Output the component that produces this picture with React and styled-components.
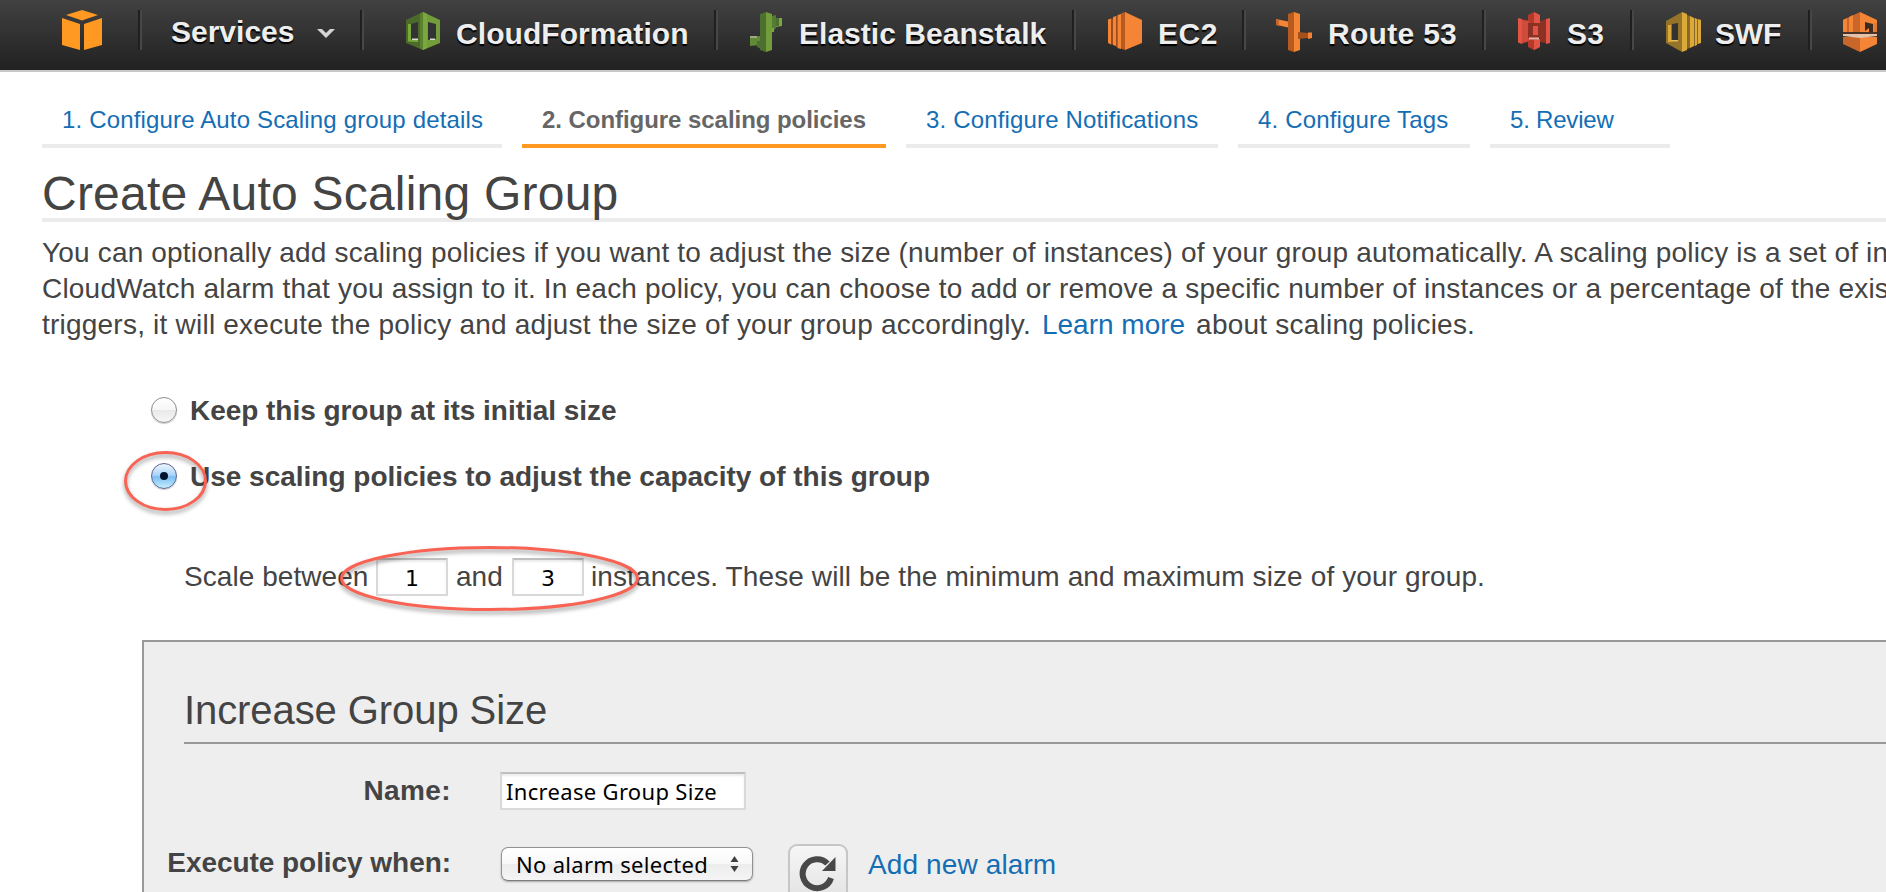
import React from "react";
import styled, { createGlobalStyle, css } from "styled-components";

const GlobalStyle = createGlobalStyle`
  * { box-sizing: border-box; }
  html, body { margin: 0; padding: 0; }
  body {
    background: #fff;
    color: #444;
    font-family: "Liberation Sans", Arial, sans-serif;
    overflow: hidden;
  }
`;

const Page = styled.div`
  display: flex;
  flex-direction: column;
  width: 100%;
  height: 892px;
  overflow: hidden;
`;

/* ---------- top navigation ---------- */

const NavBar = styled.header`
  display: flex;
  flex: none;
  height: 72px;
  overflow: hidden;
  background: linear-gradient(#414141, #222 98%);
  border-bottom: 2px solid #c8c8c8;
`;

const NavItem = styled.div`
  display: flex;
  flex: none;
  align-items: flex-start;
  width: ${(p) => p.$width}px;
  padding: ${(p) => p.$top ?? 12}px 0 0 ${(p) => p.$indent ?? 28}px;
`;

const Divider = styled.div`
  flex: none;
  width: 4px;
  height: 40px;
  margin-top: 10px;
  border-left: 2px solid #1f1f1f;
  border-right: 2px solid #474747;
`;

const NavLabel = styled.span`
  margin: ${(p) => p.$top ?? 4}px 0 0 ${(p) => p.$gap ?? 13}px;
  color: #eee;
  font-size: 30px;
  font-weight: bold;
  line-height: 36px;
  letter-spacing: ${(p) => p.$track ?? 0}px;
  text-shadow: 0 2px 1px #000;
  white-space: nowrap;
`;

const Caret = styled.svg`
  flex: none;
  display: block;
  margin: 14px 0 0 22px;
`;

const Icon = styled.svg`
  flex: none;
  display: block;
`;

/* ---------- wizard tabs ---------- */

const Tabs = styled.nav`
  display: flex;
  flex: none;
  gap: 20px;
  padding: 32px 0 0 42px;
`;

const Tab = styled.a`
  flex: none;
  width: ${(p) => p.$width}px;
  height: 44px;
  padding: 1px 0 0 20px;
  border-bottom: 4px solid #ebebeb;
  color: #146eb4;
  font-size: 24px;
  line-height: 30px;
  letter-spacing: ${(p) => p.$track}px;
  white-space: nowrap;
  ${(p) =>
    p.$active &&
    css`
      border-color: #ff9922;
      color: #666;
      font-weight: bold;
    `}
`;

/* ---------- page head ---------- */

const Title = styled.h1`
  flex: none;
  height: 56px;
  margin: 18px 0 0 42px;
  border-bottom: 4px solid #ebebeb;
  font-size: 48px;
  font-weight: normal;
  line-height: 56px;
  letter-spacing: 0.22px;
`;

const Intro = styled.div`
  flex: none;
  margin: 13px 0 0 42px;
  font-size: 28px;
  line-height: 36px;
`;

const Line = styled.div`
  letter-spacing: ${(p) => p.$track}px;
  white-space: nowrap;
`;

const Link = styled.a`
  color: #146eb4;
  font-size: 28px;
  letter-spacing: ${(p) => p.$track ?? 0}px;
  white-space: nowrap;
`;

const IntroLink = styled(Link)`
  margin: 0 3px;
`;

/* ---------- options ---------- */

const Options = styled.div`
  display: flex;
  flex: none;
  flex-direction: column;
  gap: 30px;
  padding: 50px 0 0 151px;
`;

const Option = styled.label`
  position: relative;
  display: flex;
  align-items: center;
  height: 36px;
  gap: 13px;
  font-size: 28px;
  font-weight: bold;
  line-height: 36px;
  letter-spacing: ${(p) => p.$track}px;
  white-space: nowrap;
`;

const Radio = styled.span`
  flex: none;
  display: flex;
  align-items: center;
  justify-content: center;
  width: 26px;
  height: 26px;
  margin-bottom: 2px;
  border: 1.5px solid #8f8f8f;
  border-radius: 50%;
  background: linear-gradient(#fff 0%, #f7f7f7 48%, #e9e9e9 52%, #f6f6f6 100%);
  box-shadow: 0 1px 1px rgba(0, 0, 0, 0.2);
  ${(p) =>
    p.$on &&
    css`
      border-color: #5b6390;
      background: linear-gradient(#eef6fe 0%, #a9d3f8 47%, #7bbcf3 53%, #c4f0ff 100%);
      &::after {
        content: "";
        width: 8px;
        height: 8px;
        border-radius: 50%;
        background: #04142c;
      }
    `}
`;

const ScaleRow = styled.div`
  position: relative;
  display: flex;
  flex: none;
  height: 38px;
  margin-top: 63px;
  padding-left: 184px;
  font-size: 28px;
  line-height: 37px;
  white-space: nowrap;
`;

const ScaleText = styled.span`
  width: ${(p) => p.$width}px;
  padding-left: ${(p) => p.$indent ?? 0}px;
  letter-spacing: ${(p) => p.$track ?? 0}px;
`;

const Field = styled.input`
  display: block;
  flex: none;
  width: ${(p) => p.$width}px;
  height: 38px;
  margin: 0;
  padding: ${(p) => (p.$digit ? "2px 0 0" : "0 4px 1px")};
  border: 2px solid #d9d9d9;
  border-top-color: #bfbfbf;
  border-radius: 0;
  outline: none;
  background: #fff;
  box-shadow: inset 0 2px 2px rgba(0, 0, 0, 0.08);
  color: #000;
  font: 22px ${(p) => (p.$digit ? '"DejaVu Sans"' : '"Noto Sans"')}, sans-serif;
  letter-spacing: ${(p) => (p.$digit ? 0 : 0.32)}px;
  text-align: ${(p) => (p.$digit ? "center" : "left")};
`;

const Marker = styled.svg`
  position: absolute;
  left: ${(p) => p.$left}px;
  top: ${(p) => p.$top}px;
  overflow: visible;
  pointer-events: none;
  filter: drop-shadow(0 3px 2px rgba(0, 0, 0, 0.38));
`;

/* ---------- policy panel ---------- */

const Panel = styled.section`
  flex: 1;
  margin: 44px 0 0 142px;
  border: 2px solid #999;
  border-width: 2px 0 0 2px;
  background: #eee;
`;

const PanelTitle = styled.h2`
  height: 58px;
  margin: 44px 0 0 40px;
  border-bottom: 2px solid #999;
  font-size: 40px;
  font-weight: normal;
  line-height: 48px;
  letter-spacing: -0.08px;
`;

const FormRow = styled.div`
  display: grid;
  grid-template-columns: 307px auto;
  column-gap: ${(p) => p.$gap}px;
  margin-top: ${(p) => p.$top}px;
`;

const FormLabel = styled.div`
  font-size: 28px;
  font-weight: bold;
  line-height: ${(p) => p.$line}px;
  letter-spacing: ${(p) => p.$track}px;
  text-align: right;
  white-space: nowrap;
`;

const Controls = styled.div`
  display: flex;
  align-items: flex-start;
`;

const Select = styled.div`
  display: flex;
  flex: none;
  justify-content: space-between;
  align-items: center;
  width: 252px;
  height: 34px;
  margin-top: 3px;
  padding: 0 13px 0 14px;
  border: 1.5px solid #929292;
  border-bottom-color: #7c7c7c;
  border-radius: 7px;
  background: linear-gradient(#fff 0%, #f8f8f8 48%, #ececec 52%, #f5f5f5 100%);
  box-shadow: 0 1px 2px rgba(0, 0, 0, 0.3);
  color: #000;
  font: 22px/30px "Noto Sans", sans-serif;
  letter-spacing: 0.3px;
  white-space: nowrap;
`;

const RefreshButton = styled.button`
  display: flex;
  flex: none;
  align-items: flex-start;
  width: 60px;
  height: 60px;
  margin: 0 20px 0 35px;
  padding: 9px 0 0 9px;
  border: 2px solid #c6c6c6;
  border-radius: 9px;
  background: linear-gradient(#f6f6f6, #e2e2e2);
`;

const AlarmLink = styled(Link)`
  margin-top: 3px;
  line-height: 36px;
`;

/* ---------- icons ---------- */

const CubeIcon = () => (
  <Icon width="40" height="40" viewBox="0 0 40 40" fill="#ff9922">
    <path d="M4 5 20 0l16 5-16 5.5z" />
    <path d="M0 8l18 6v26L0 35z" />
    <path d="M40 8l-18 6v26l18-5z" />
  </Icon>
);

const CloudFormationIcon = () => (
  <Icon width="40" height="40" viewBox="0 0 40 40">
    <path d="M3 8 20 0v38L3 31z" fill="#4c6b2b" />
    <path d="M37 8 20 0v38l17-7z" fill="#739c3a" />
    <path d="M17 1.5 20 0v38l-3-1.5z" fill="#5b8030" />
    <path d="M20 0l4 2v34l-4 2z" fill="#7aa83f" />
    <path d="M5 12h3v16h7v2l-10-.5z" fill="#7aa83f" />
    <path d="M8 12l7-2v18l-7-1z" fill="#333" />
    <path d="M9 26.500h6v1.500H9z" fill="#d9dccb" />
    <path d="M25 10l8 2v15l-8 1z" fill="#333" />
    <path d="M27 26.500h5v1.500h-5z" fill="#d9dccb" />
  </Icon>
);

const BeanstalkIcon = () => (
  <Icon width="40" height="40" viewBox="0 0 40 40">
    <path d="M14 2 20 0v40l-6-2z" fill="#4c7030" />
    <path d="M20 0l6 2v36l-6 2z" fill="#739c3a" />
    <path d="M4 25l10-1v9L4 34z" fill="#618a36" />
    <path d="M4 24h7v2H4z" fill="#a3a884" />
    <path d="M11 29h4v8l-4-2z" fill="#4c7030" />
    <path d="M26 4l4-1v13l-4 4z" fill="#567c33" />
    <path d="M30 6h6v8l-6 1z" fill="#7aa83f" />
    <path d="M26 16h2v4h-2z" fill="#7aa83f" />
    <path d="M30 6h3v8h-3z" fill="#4c7030" />
  </Icon>
);

const Ec2Icon = () => (
  <Icon width="40" height="40" viewBox="0 0 40 40">
    <path d="M16 1.5 20 0v38l-4-1.5z" fill="#b65a20" />
    <path d="M20 0l17 8v23l-17 7z" fill="#f58536" />
    <path d="M3 7.500l3-1v26l-3-1.500z" fill="#f58536" />
    <path d="M6 6.500h2v26H6z" fill="#9d4c1b" />
    <path d="M8 5l3-1v30l-3-1z" fill="#f58536" />
    <path d="M11 4h1.500v31H11z" fill="#9d4c1b" />
    <path d="M12.500 3l3.500-1v35l-3.500-1z" fill="#f58536" />
  </Icon>
);

const Route53Icon = () => (
  <Icon width="40" height="40" viewBox="0 0 40 40">
    <path d="M14 2 20 0v40l-6-2z" fill="#b65a20" />
    <path d="M20 0l6 2v36l-6 2z" fill="#f58536" />
    <path d="M2 7l12 2.500v6L3 13z" fill="#f58536" />
    <path d="M2 7l3 1v6l-3-1z" fill="#c9672a" />
    <path d="M24 20l10 1v5l-10 1z" fill="#a5511e" />
    <path d="M34 20.500h4V26l-4 1z" fill="#f58536" />
  </Icon>
);

const S3Icon = () => (
  <Icon width="40" height="40" viewBox="0 0 40 40">
    <path d="M4 6l4 1v25l-4-1.500z" fill="#e25444" />
    <path d="M8 7l6 1v22l-6 2z" fill="#8c3123" />
    <path d="M14 3l6-3v11l-6 1z" fill="#b13a2b" />
    <path d="M20 0l6 3v8l-6 1z" fill="#e25444" />
    <path d="M14 27h12v8l-6 3-6-3z" fill="#b13a2b" />
    <path d="M20 28l6-1v8l-6 3z" fill="#e25444" />
    <path d="M8 8l7 1v20l-7 2z" fill="#d04b3c" />
    <path d="M14 11h12v15H14z" fill="#8c3123" />
    <path d="M19 14h5v9h-5z" fill="#e25444" />
    <path d="M15 25.500h10v2H15z" fill="#e9b3a8" />
    <path d="M26 9l6-2v24l-6-1z" fill="#8c3123" />
    <path d="M32 7l4-1v25l-4 1z" fill="#e25444" />
  </Icon>
);

const SwfIcon = () => (
  <Icon width="40" height="40" viewBox="0 0 40 40">
    <path d="M2 9 18 0v40L2 31z" fill="#957328" />
    <path d="M18 0l5 2v36l-5 2z" fill="#dba93a" />
    <path d="M4 13h3v17H4z" fill="#dba93a" />
    <path d="M7 28h7v1.500H7z" fill="#e5bd55" />
    <path d="M8 12l6-1v17H8z" fill="#333" />
    <path d="M23 3l3 1v32l-3 1z" fill="#8a6a26" />
    <path d="M26 4l4 2v28l-4 2z" fill="#dba93a" />
    <path d="M31 6l2 1v26l-2 1z" fill="#dba93a" />
    <path d="M34 7l3 1v23l-3 1z" fill="#dba93a" />
    <path d="M30 6h1v28h-1zM33 7h1v25h-1z" fill="#8a6a26" />
  </Icon>
);

const TransferIcon = () => (
  <Icon width="40" height="40" viewBox="0 0 40 40">
    <path d="M3 8l17-8v20H3z" fill="#c9672a" />
    <path d="M3 8l4-2v14H3zM9 5l4-2v17H9z" fill="#f58536" />
    <path d="M20 0l17 8v12H20z" fill="#f58536" />
    <path d="M25 10l8 2v8h-4v-4l-4 3z" fill="#3a2a20" />
    <path d="M34 11h3v9h-3z" fill="#e07a31" />
    <path d="M3 25h17v15L3 32z" fill="#c9672a" />
    <path d="M20 25h17v7l-17 8z" fill="#f58536" />
    <path d="M3 22h34v2l-17 2-17-2z" fill="#e3c2aa" />
    <path d="M3 20h34v2H3z" fill="#4b3327" />
  </Icon>
);

const RefreshIcon = () => (
  <Icon width="37" height="37" viewBox="0 0 37 37">
    <path
      d="M28.500 8.500A14.500 14.500 0 1 0 32 23"
      fill="none"
      stroke="#484848"
      strokeWidth="6"
    />
    <path d="M36.500 2v14H23z" fill="#484848" />
  </Icon>
);

const services = [
  { name: "CloudFormation", icon: <CloudFormationIcon />, width: 350, indent: 39, track: 0.07 },
  { name: "Elastic Beanstalk", icon: <BeanstalkIcon />, width: 354, track: 0.03 },
  { name: "EC2", icon: <Ec2Icon />, width: 166, indent: 29, track: 0.5 },
  { name: "Route 53", icon: <Route53Icon />, width: 236, track: 0.3, gap: 14 },
  { name: "S3", icon: <S3Icon />, width: 144, track: 0.2 },
  { name: "SWF", icon: <SwfIcon />, width: 174, indent: 30, track: -0.2, gap: 11 },
];

const steps = [
  { label: "1. Configure Auto Scaling group details", width: 460, track: 0.16 },
  { label: "2. Configure scaling policies", width: 364, track: -0.05, active: true },
  { label: "3. Configure Notifications", width: 312, track: 0.16 },
  { label: "4. Configure Tags", width: 232, track: 0.16 },
  { label: "5. Review", width: 180, track: -0.2 },
];

export default function App() {
  return (
    <Page>
      <GlobalStyle />
      <NavBar>
        <NavItem $width={138} $indent={62} $top={10}>
          <CubeIcon />
        </NavItem>
        <Divider />
        <NavItem $width={218} $indent={29} $top={14}>
          <NavLabel $top={0} $gap={0}>
            Services
          </NavLabel>
          <Caret width="20" height="12" viewBox="0 0 20 12">
            <path d="M1 1h5l4 4 4-4h5l-9 9z" fill="#d4d4d4" />
          </Caret>
        </NavItem>
        {services.map((s) => (
          <React.Fragment key={s.name}>
            <Divider />
            <NavItem $width={s.width} $indent={s.indent}>
              {s.icon}
              <NavLabel $track={s.track} $gap={s.gap}>
                {s.name}
              </NavLabel>
            </NavItem>
          </React.Fragment>
        ))}
        <Divider />
        <NavItem $width={74}>
          <TransferIcon />
        </NavItem>
      </NavBar>

      <Tabs>
        {steps.map((s) => (
          <Tab key={s.label} $width={s.width} $track={s.track} $active={s.active}>
            {s.label}
          </Tab>
        ))}
      </Tabs>

      <Title>Create Auto Scaling Group</Title>

      <Intro>
        <Line $track={0.175}>
          You can optionally add scaling policies if you want to adjust the size (number of
          instances) of your group automatically. A scaling policy is a set of in
        </Line>
        <Line $track={0.2}>
          CloudWatch alarm that you assign to it. In each policy, you can choose to add or remove a
          specific number of instances or a percentage of the exis
        </Line>
        <Line $track={0.22}>
          triggers, it will execute the policy and adjust the size of your group accordingly.{" "}
          <IntroLink>Learn more</IntroLink> about scaling policies.
        </Line>
      </Intro>

      <Options>
        <Option $track={-0.04}>
          <Radio />
          Keep this group at its initial size
        </Option>
        <Option $track={-0.01}>
          <Radio $on />
          Use scaling policies to adjust the capacity of this group
          <Marker $left={-27} $top={-8} width="83" height="60">
            <ellipse cx="41.5" cy="30" rx="40" ry="28.500" fill="none" stroke="#f96353" strokeWidth="3" />
          </Marker>
        </Option>
      </Options>

      <ScaleRow>
        <ScaleText $width={192} $track={0.06}>
          Scale between
        </ScaleText>
        <Field $width={72} $digit defaultValue="1" />
        <ScaleText $width={64} $indent={8}>
          and
        </ScaleText>
        <Field $width={72} $digit defaultValue="3" />
        <ScaleText $width={910} $indent={7} $track={0.11}>
          instances. These will be the minimum and maximum size of your group.
        </ScaleText>
        <Marker $left={340} $top={-12} width="299" height="65">
          <ellipse cx="149.5" cy="32.500" rx="148" ry="31" fill="none" stroke="#f96353" strokeWidth="3" />
        </Marker>
      </ScaleRow>

      <Panel>
        <PanelTitle>Increase Group Size</PanelTitle>
        <FormRow $top={28} $gap={49}>
          <FormLabel $line={37} $track={0.4}>
            Name:
          </FormLabel>
          <Controls>
            <Field $width={246} defaultValue="Increase Group Size" />
          </Controls>
        </FormRow>
        <FormRow $top={34} $gap={50}>
          <FormLabel $line={38} $track={-0.05}>
            Execute policy when:
          </FormLabel>
          <Controls>
            <Select>
              No alarm selected
              <Icon width="9" height="16" viewBox="0 0 9 16" fill="#404040">
                <path d="M4.500 0 8.500 6H.5zM4.500 16l4-6h-8z" />
              </Icon>
            </Select>
            <RefreshButton aria-label="Refresh">
              <RefreshIcon />
            </RefreshButton>
            <AlarmLink $track={0.12}>Add new alarm</AlarmLink>
          </Controls>
        </FormRow>
      </Panel>
    </Page>
  );
}
